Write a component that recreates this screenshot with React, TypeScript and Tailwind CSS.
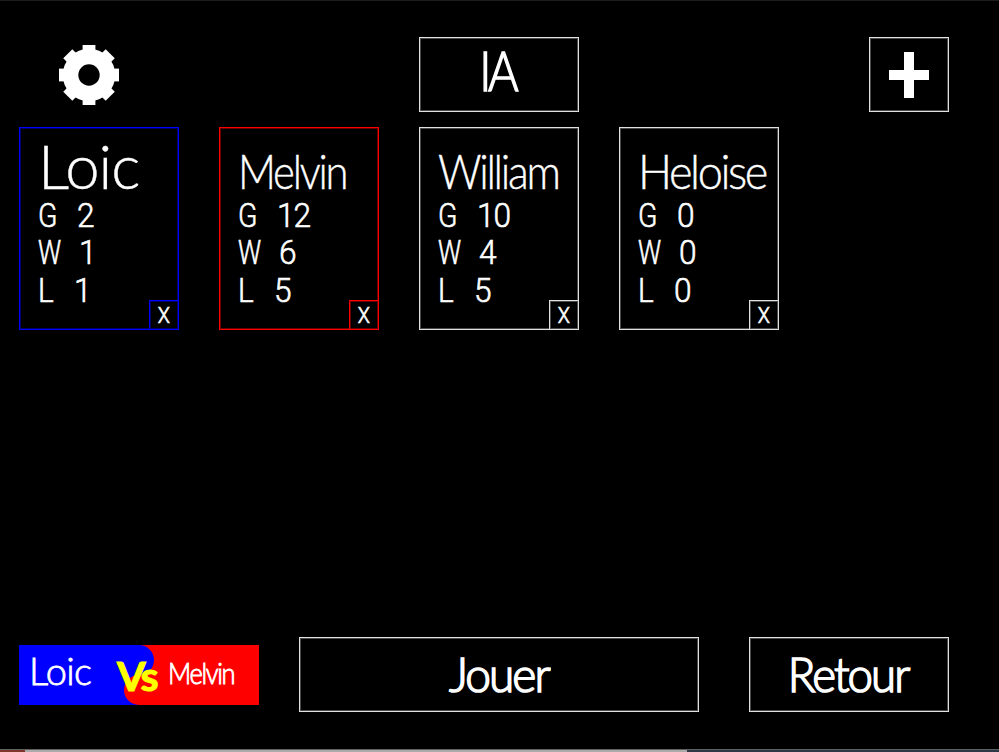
type Player = { name: string; games: string; wins: string; losses: string; tone: string; nameStyle: string };

const blue = "border-[#0000ff] shadow-[inset_0_0_0_1px_#00006b]";
const red = "border-[#ff0000] shadow-[inset_0_0_0_1px_#6b0000]";
const white = "border-[#e0e0e0] shadow-[inset_0_0_0_1px_#4a4a4a]";

const players: Player[] = [
  { name: "Loic", games: "2", wins: "1", losses: "1", tone: blue, nameStyle: "text-[61px] leading-[48px] tracking-[-1px] scale-x-[1.01]" },
  { name: "Melvin", games: "12", wins: "6", losses: "5", tone: red, nameStyle: "text-[47px] leading-[37px] tracking-[-2.5px] scale-x-[0.89]" },
  { name: "William", games: "10", wins: "4", losses: "5", tone: white, nameStyle: "text-[47px] leading-[37px] tracking-[-2.5px] scale-x-[0.91]" },
  { name: "Heloise", games: "0", wins: "0", losses: "0", tone: white, nameStyle: "text-[47px] leading-[37px] tracking-[-2.5px] scale-x-[0.96]" },
];

function Gear() {
  return (
    <svg className="h-[60px] w-[60px]" viewBox="-30 -30 60 60" fill="white">
      <circle r="26.3" />
      {[0, 45, 90, 135].map((a) => (
        <rect key={a} x="-6.4" y="-30" width="12.8" height="60" transform={`rotate(${a})`} />
      ))}
      <circle r="10.7" fill="black" />
    </svg>
  );
}

function Stat({ label, value, labelStyle }: { label: string; value: string; labelStyle: string }) {
  return (
    <div className="flex h-[37.5px] items-center text-[33px] leading-[36px]">
      <span className={`origin-left ${labelStyle}`}>{label}</span>
      <span className="origin-left scale-x-[0.96] tracking-[-1px]">{value}</span>
    </div>
  );
}

function Card({ player }: { player: Player }) {
  return (
    <div className={`relative h-[203px] w-40 border ${player.tone}`}>
      <div className="flex h-[62px] items-end pl-[18px] [-webkit-text-stroke:0.4px_white]">
        <span className={`block w-0 origin-left whitespace-nowrap ${player.nameStyle}`}>
          <span className="inline-block">{player.name}</span>
        </span>
      </div>
      <div className="pt-[7px] pl-[18px] font-['Roboto',sans-serif] font-light [-webkit-text-stroke:0.6px_white]">
        <Stat label="G" value={player.games} labelStyle="w-[39px] scale-x-[0.86]" />
        <Stat label="W" value={player.wins} labelStyle="w-[41px] scale-x-[0.78]" />
        <Stat label="L" value={player.losses} labelStyle="w-[36px] scale-x-[0.9]" />
      </div>
      <button className={`absolute -right-px -bottom-px flex h-[30px] w-[30px] items-center justify-center border pt-0.5 font-['Roboto',sans-serif] text-[22px] leading-none [-webkit-text-stroke:0.7px_white] ${player.tone}`}>
        <span className="scale-x-[0.9]">X</span>
      </button>
    </div>
  );
}

export default function App() {
  return (
    <div className="flex h-[752px] w-[999px] flex-col overflow-hidden border-t border-[#1c1c1c] bg-black font-['Lato',sans-serif] font-light text-white">
      <header className="mt-9 flex h-[75px] items-center pl-[59px]">
        <Gear />
        <button className={`ml-[300px] flex h-[75px] w-40 items-center justify-center border pr-1 pb-2 text-[55px] leading-none tracking-[-4px] [-webkit-text-stroke:1.5px_white] ${white}`}>
          <span className="scale-x-[0.85]">IA</span>
        </button>
        <button className={`ml-[290px] flex h-[75px] w-20 items-center justify-center border ${white}`}>
          <svg className="h-[46px] w-10" viewBox="0 0 40 46" fill="white">
            <path d="M15 0h10v18h15v10H25v18H15V28H0V18h15z" />
          </svg>
        </button>
      </header>
      <main className="mt-[15px] flex gap-10 pl-[19px]">
        {players.map((p) => (
          <Card key={p.name} player={p} />
        ))}
      </main>
      <footer className="mt-[307px] flex h-[75px] items-center pl-[19px]">
        <div className="relative flex h-[60px] w-60">
          <div className="h-full w-1/2 bg-[#0000ff] pl-2.5 text-[38px] leading-[50px] tracking-[-0.7px] [-webkit-text-stroke:0.8px_white]">Loic</div>
          <div className="h-full w-1/2 bg-[#ff0000] pl-[29px] text-[29px] leading-[56px] [-webkit-text-stroke:0.9px_white]">
            <span className="inline-block origin-left scale-x-[0.88] tracking-[-1.5px]">Melvin</span>
          </div>
          <div className="absolute top-0 left-[105px] h-[30px] w-[30px] rounded-full bg-[#0000ff]" />
          <div className="absolute bottom-0 left-[105px] h-[30px] w-[30px] rounded-full bg-[#ff0000]" />
          <div className="absolute top-[7px] left-[98px] origin-left scale-x-[1.03] text-[40px] leading-[48px] font-bold tracking-[-2px] text-[#ffff00] [-webkit-text-stroke:1px_#ffff00]">Vs</div>
        </div>
        <button className={`ml-10 flex h-[75px] w-[400px] items-center justify-center border text-[47px] leading-none tracking-[-2px] [-webkit-text-stroke:1.6px_white] ${white}`}>
          <span className="scale-x-[0.98]">Jouer</span>
        </button>
        <button className={`ml-[50px] flex h-[75px] w-[200px] items-center justify-center border pr-0.5 text-[47px] leading-none tracking-[-2px] [-webkit-text-stroke:1.6px_white] ${white}`}>
          <span className="scale-x-[0.97]">Retour</span>
        </button>
      </footer>
      <div className="mt-[37px] h-px shrink-0 bg-[#606060]" />
      <div className="flex h-0.5 shrink-0">
        <div className="w-[25px] bg-[#7d3527]" />
        <div className="w-[662px] bg-[#aaaaaa]" />
        <div className="flex-1 bg-[#2d3946]" />
      </div>
    </div>
  );
}
